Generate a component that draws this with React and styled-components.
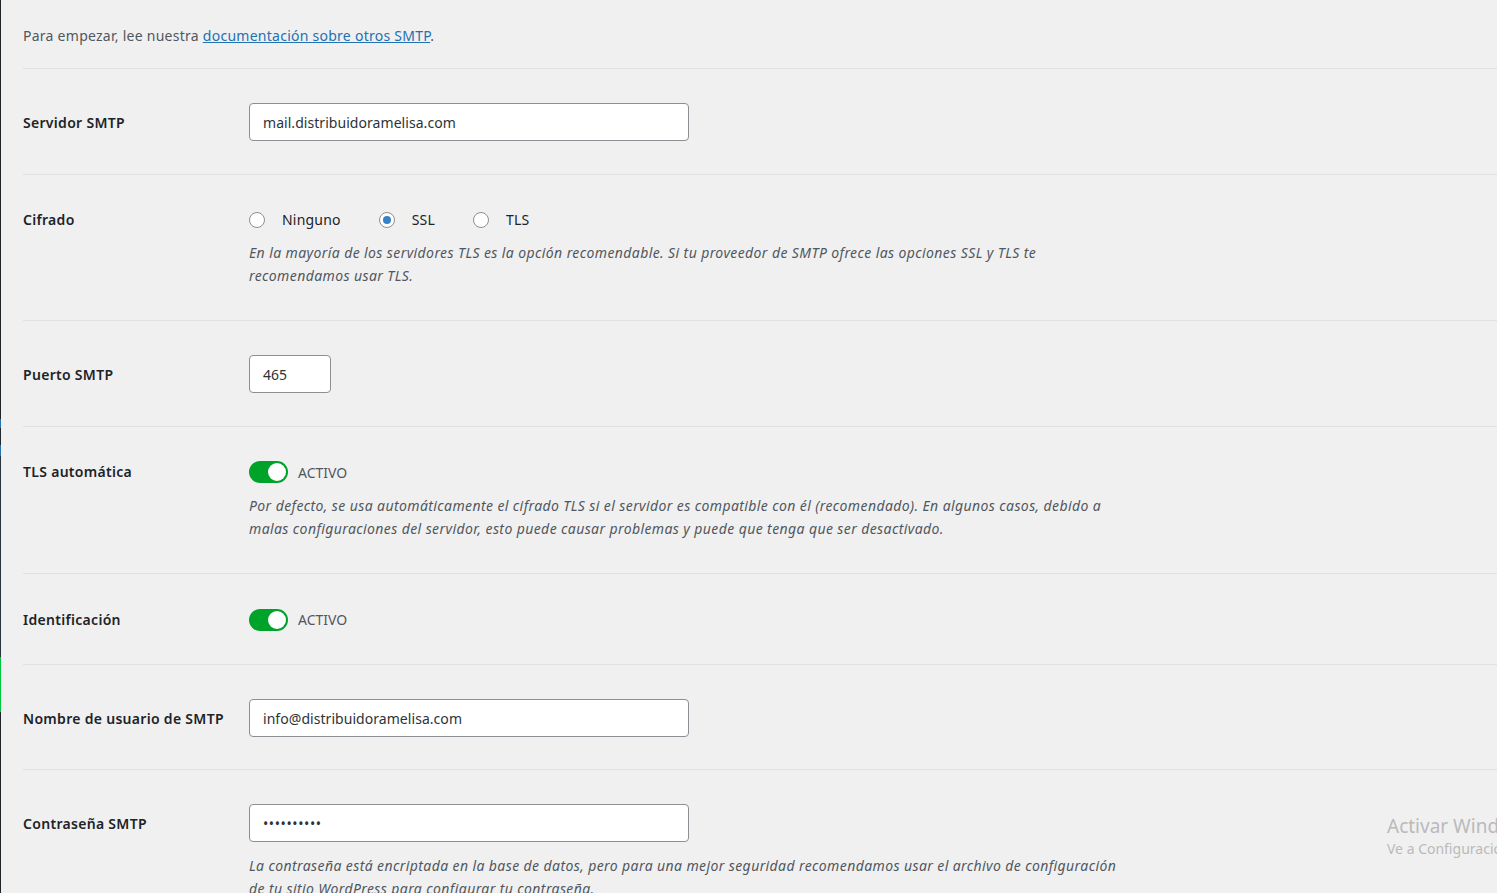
import React from "react";
import styled, { createGlobalStyle } from "styled-components";

const Global = createGlobalStyle`
  html, body { margin: 0; padding: 0; overflow: hidden; }
  body {
    background: #f0f0f1;
    font-family: "Noto Sans", "Open Sans", sans-serif;
    font-size: 14px;
    color: #3c434a;
  }
`;

const Page = styled.div`
  display: flex;
  height: 893px;
  width: 1497px;
  overflow: hidden;
`;

const Strip = styled.div`
  width: 1px;
  display: flex;
  flex-direction: column;
  flex-shrink: 0;
`;

const Seg = styled.div`
  height: ${(p) => p.h}px;
  background: ${(p) => p.c};
`;

const Main = styled.div`
  flex: 1;
  padding-left: 22px;
  position: relative;
`;

const Intro = styled.p`
  margin: 0;
  padding: 26px 0 23px;
  line-height: 19px;
  color: #50575e;
  letter-spacing: 0.26px;
  border-bottom: 1px solid #e0e0e0;
`;

const Link = styled.a`
  color: #2271b1;
  text-decoration: underline;
`;

const Row = styled.div`
  display: grid;
  grid-template-columns: 226px 1fr;
  align-items: start;
  padding: 34px 0 ${(p) => p.pb || 33}px;
  border-bottom: 1px solid #e0e0e0;
`;

const Label = styled.div`
  font-weight: 600;
  color: #1d2327;
  letter-spacing: 0.3px;
  height: ${(p) => p.lh}px;
  display: flex;
  align-items: center;
`;

const Field = styled.div`
  display: flex;
  flex-direction: column;
  align-items: flex-start;
`;

const Input = styled.div`
  box-sizing: border-box;
  width: ${(p) => p.w}px;
  height: 38px;
  display: flex;
  align-items: center;
  padding: 0 13px;
  background: #fff;
  border: 1px solid #8c8f94;
  border-radius: 4px;
  color: #2c3338;
  letter-spacing: ${(p) => (p.dots ? "0.6px" : "0.05px")};
`;

const Radios = styled.div`
  display: flex;
  align-items: center;
  height: 21px;
`;

const RadioItem = styled.label`
  display: flex;
  align-items: center;
  margin-right: 38px;
  color: #1d2327;
  letter-spacing: 0.2px;
`;

const RadioCircle = styled.span`
  box-sizing: border-box;
  width: 16px;
  height: 16px;
  border-radius: 50%;
  border: 1px solid #8c8f94;
  background: #fff;
  margin-right: 17px;
  display: flex;
  align-items: center;
  justify-content: center;
  &::after {
    content: "";
    display: ${(p) => (p.checked ? "block" : "none")};
    width: 8px;
    height: 8px;
    border-radius: 50%;
    background: #3582c4;
  }
`;

const ToggleLine = styled.div`
  display: flex;
  align-items: center;
  height: ${(p) => p.h || 22}px;
`;

const Toggle = styled.span`
  box-sizing: border-box;
  width: 39px;
  height: 22px;
  border-radius: 11px;
  background: #00a32a;
  display: flex;
  align-items: center;
  justify-content: flex-end;
  padding-right: 2px;
  margin-right: 10px;
  &::after {
    content: "";
    width: 18px;
    height: 18px;
    border-radius: 50%;
    background: #fff;
  }
`;

const ToggleText = styled.span`
  color: #50575e;
  text-transform: uppercase;
`;

const Desc = styled.p`
  margin: ${(p) => p.mt}px 0 0;
  font-style: italic;
  color: #50575e;
  line-height: 23px;
  letter-spacing: 0.4px;
  white-space: nowrap;
`;

const Watermark = styled.div`
  position: absolute;
  left: 1386px;
  top: 813px;
  color: #bababa;
  white-space: nowrap;
`;

const WTitle = styled.div`
  font-size: 19px;
  line-height: 26px;
`;

const WSub = styled.div`
  font-size: 14px;
  line-height: 20px;
`;

const Radio = ({ checked, children }) => (
  <RadioItem>
    <RadioCircle checked={checked} />
    {children}
  </RadioItem>
);

export default function App() {
  return (
    <>
      <Global />
      <Page>
        <Strip>
          <Seg h={419} c="#1d2327" />
          <Seg h={9} c="#2271b1" />
          <Seg h={17} c="#23282d" />
          <Seg h={11} c="#2271b1" />
          <Seg h={201} c="#2c3338" />
          <Seg h={55} c="#00c83c" />
          <Seg h={181} c="#1d2327" />
        </Strip>
        <Main>
          <Intro>
            Para empezar, lee nuestra <Link href="#">documentación sobre otros SMTP</Link>.
          </Intro>
          <Row>
            <Label lh={38}>Servidor SMTP</Label>
            <Field>
              <Input w={440}>mail.distribuidoramelisa.com</Input>
            </Field>
          </Row>
          <Row>
            <Label lh={20}>Cifrado</Label>
            <Field>
              <Radios>
                <Radio>Ninguno</Radio>
                <Radio checked>SSL</Radio>
                <Radio>TLS</Radio>
              </Radios>
              <Desc mt={11}>
                En la mayoría de los servidores TLS es la opción recomendable. Si tu proveedor de SMTP ofrece las opciones SSL y TLS te
                <br />
                recomendamos usar TLS.
              </Desc>
            </Field>
          </Row>
          <Row>
            <Label lh={38}>Puerto SMTP</Label>
            <Field>
              <Input w={82}>465</Input>
            </Field>
          </Row>
          <Row>
            <Label lh={20}>TLS automática</Label>
            <Field>
              <ToggleLine>
                <Toggle />
                <ToggleText>Activo</ToggleText>
              </ToggleLine>
              <Desc mt={11}>
                Por defecto, se usa automáticamente el cifrado TLS si el servidor es compatible con él (recomendado). En algunos casos, debido a
                <br />
                malas configuraciones del servidor, esto puede causar problemas y puede que tenga que ser desactivado.
              </Desc>
            </Field>
          </Row>
          <Row>
            <Label lh={22}>Identificación</Label>
            <Field>
              <ToggleLine h={23}>
                <Toggle />
                <ToggleText>Activo</ToggleText>
              </ToggleLine>
            </Field>
          </Row>
          <Row pb={32}>
            <Label lh={38}>Nombre de usuario de SMTP</Label>
            <Field>
              <Input w={440}>info@distribuidoramelisa.com</Input>
            </Field>
          </Row>
          <Row>
            <Label lh={38}>Contraseña SMTP</Label>
            <Field>
              <Input w={440} dots>••••••••••</Input>
              <Desc mt={12}>
                La contraseña está encriptada en la base de datos, pero para una mejor seguridad recomendamos usar el archivo de configuración
                <br />
                de tu sitio WordPress para configurar tu contraseña.
              </Desc>
            </Field>
          </Row>
          <Watermark>
            <WTitle>Activar Windows</WTitle>
            <WSub>Ve a Configuración para activar Windows.</WSub>
          </Watermark>
        </Main>
      </Page>
    </>
  );
}
